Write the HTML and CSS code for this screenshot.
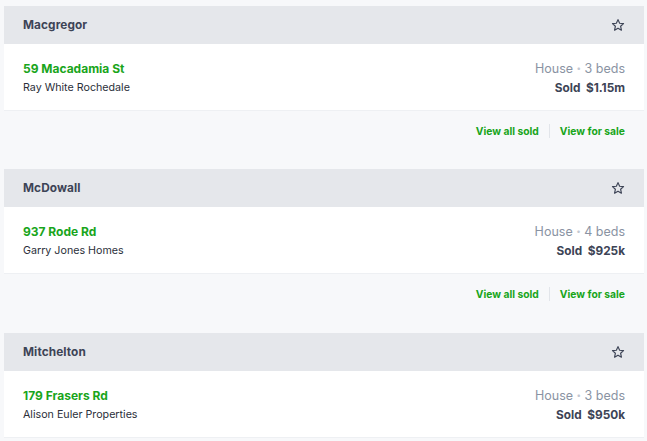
FILE: index.html
```html
<!DOCTYPE html>
<html>
<head>
<meta charset="utf-8">
<link rel="stylesheet" href="styles.css">
</head>
<body>
<div class="list">
  <section class="suburb">
    <div class="suburb-head">
      <span class="suburb-name">Macgregor</span>
      <svg class="star" viewBox="0 0 24 24" width="14" height="14"><path d="M12 2.8l2.8 6.2 6.7.7-5 4.5 1.4 6.6L12 17.4l-5.9 3.4 1.4-6.6-5-4.5 6.7-.7z" fill="none" stroke="#3d4456" stroke-width="2" stroke-linejoin="round"/></svg>
    </div>
    <div class="listing">
      <div class="left">
        <div class="address">59 Macadamia St</div>
        <div class="agency">Ray White Rochedale</div>
      </div>
      <div class="right">
        <div class="meta">House <span class="dot">•</span> 3 beds</div>
        <div class="price">Sold&nbsp; $1.15m</div>
      </div>
    </div>
    <div class="links">
      <a class="link">View all sold</a>
      <span class="sep"></span>
      <a class="link">View for sale</a>
    </div>
  </section>
  <section class="suburb">
    <div class="suburb-head">
      <span class="suburb-name">McDowall</span>
      <svg class="star" viewBox="0 0 24 24" width="14" height="14"><path d="M12 2.8l2.8 6.2 6.7.7-5 4.5 1.4 6.6L12 17.4l-5.9 3.4 1.4-6.6-5-4.5 6.7-.7z" fill="none" stroke="#3d4456" stroke-width="2" stroke-linejoin="round"/></svg>
    </div>
    <div class="listing">
      <div class="left">
        <div class="address">937 Rode Rd</div>
        <div class="agency">Garry Jones Homes</div>
      </div>
      <div class="right">
        <div class="meta">House <span class="dot">•</span> 4 beds</div>
        <div class="price">Sold&nbsp; $925k</div>
      </div>
    </div>
    <div class="links">
      <a class="link">View all sold</a>
      <span class="sep"></span>
      <a class="link">View for sale</a>
    </div>
  </section>
  <section class="suburb">
    <div class="suburb-head">
      <span class="suburb-name">Mitchelton</span>
      <svg class="star" viewBox="0 0 24 24" width="14" height="14"><path d="M12 2.8l2.8 6.2 6.7.7-5 4.5 1.4 6.6L12 17.4l-5.9 3.4 1.4-6.6-5-4.5 6.7-.7z" fill="none" stroke="#3d4456" stroke-width="2" stroke-linejoin="round"/></svg>
    </div>
    <div class="listing">
      <div class="left">
        <div class="address">179 Frasers Rd</div>
        <div class="agency">Alison Euler Properties</div>
      </div>
      <div class="right">
        <div class="meta">House <span class="dot">•</span> 3 beds</div>
        <div class="price">Sold&nbsp; $950k</div>
      </div>
    </div>
  </section>
</div>
</body>
</html>
```

FILE: styles.css
```css
html, body {
  margin: 0;
  padding: 0;
  background: #f7f8fa;
}
body {
  font-family: Inter, "Noto Sans", sans-serif;
  overflow: hidden;
  height: 441px;
}
.list {
  padding: 6px 3px 0 4px;
  display: flex;
  flex-direction: column;
  gap: 18px;
}
.suburb:nth-child(2) {
  margin-bottom: 1px;
}
.suburb-head {
  height: 38px;
  background: #e5e7eb;
  display: flex;
  align-items: center;
  justify-content: space-between;
  padding: 0 19px;
}
.suburb-name {
  font-size: 11.8px;
  font-weight: 700;
  color: #3d4456;
  letter-spacing: 0.1px;
}
.star {
  display: block;
}
.listing {
  background: #fff;
  border-bottom: 1px solid #eef0f3;
  height: 66px;
  padding: 0 19px;
  display: flex;
  justify-content: space-between;
  align-items: center;
}
.left, .right {
  padding-top: 1px;
}
.address {
  font-size: 12px;
  font-weight: 700;
  color: #19a51b;
  line-height: 18px;
}
.agency {
  font-size: 10.7px;
  color: #2b2f3a;
  line-height: 16px;
  margin-top: 2px;
}
.right {
  text-align: right;
}
.meta {
  font-size: 12.5px;
  color: #8a93a3;
  line-height: 18px;
}
.dot {
  color: #c3c8d1;
  font-size: 8px;
  vertical-align: 2px;
}
.price {
  font-size: 11.8px;
  font-weight: 700;
  color: #3d4456;
  line-height: 16px;
  margin-top: 2px;
}
.links {
  height: 40px;
  display: flex;
  justify-content: flex-end;
  align-items: center;
  padding: 0 19px;
  gap: 10px;
}
.link {
  font-size: 10.3px;
  font-weight: 700;
  color: #19a51b;
}
.sep {
  width: 1px;
  height: 14px;
  background: #e2e5ea;
}
```
